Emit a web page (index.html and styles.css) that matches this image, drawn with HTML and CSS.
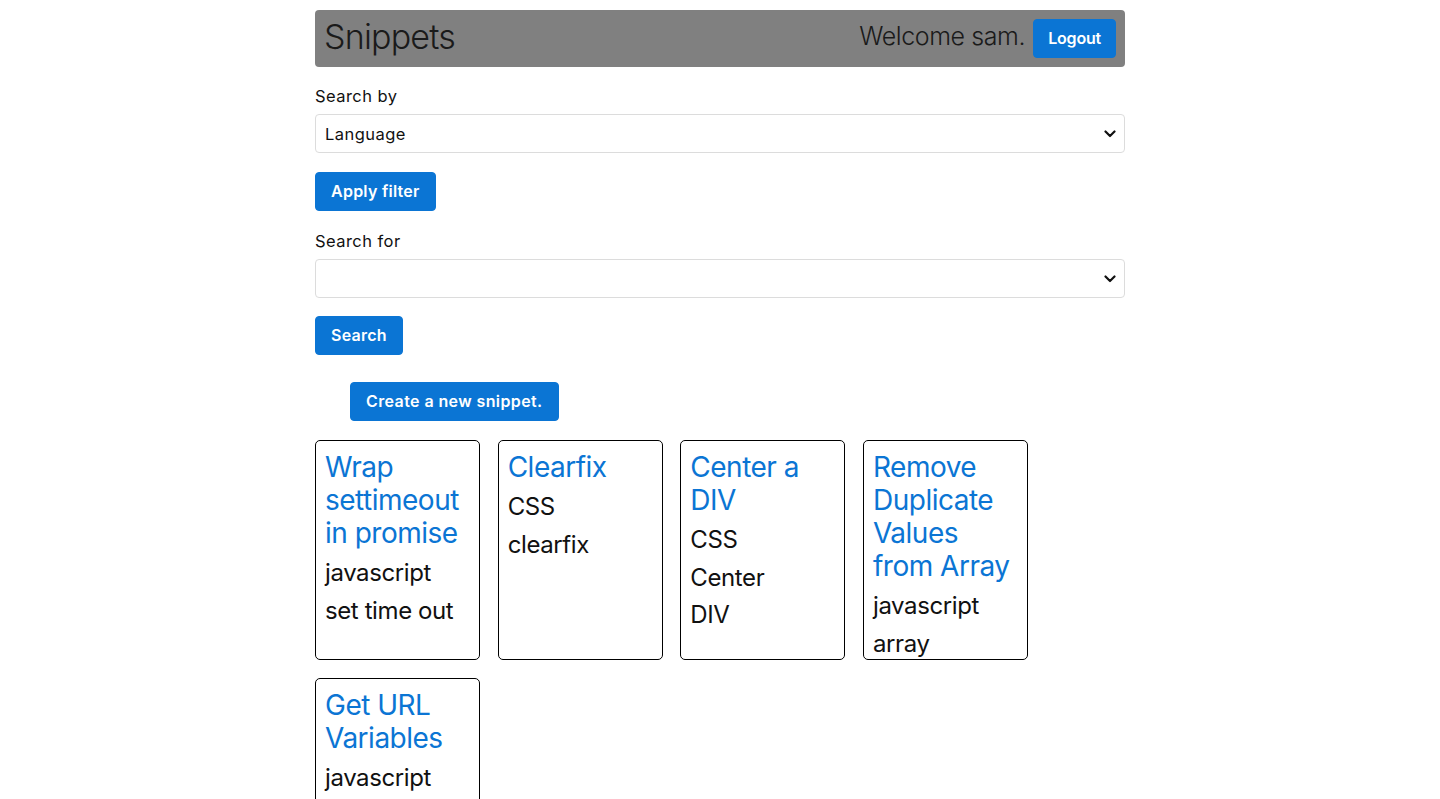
FILE: index.html
```html
<!DOCTYPE html>
<html lang="en">
<head>
<meta charset="utf-8">
<title>Snippets</title>
<link rel="stylesheet" href="styles.css">
</head>
<body>
<div class="container">
  <header class="topbar">
    <h1 class="brand">Snippets</h1>
    <div class="user">
      <span class="welcome">Welcome sam.</span>
      <button class="btn btn-logout">Logout</button>
    </div>
  </header>

  <form class="filters">
    <label class="label">Search by</label>
    <div class="select-wrap">
      <select class="select"><option>Language</option></select>
      <svg class="chev" width="12" height="8" viewBox="0 0 12 8"><path d="M1.5 1.5 L6 6 L10.5 1.5" fill="none" stroke="#111" stroke-width="2.2" stroke-linecap="round" stroke-linejoin="round"/></svg>
    </div>
    <button type="button" class="btn btn-apply">Apply filter</button>

    <label class="label label-for">Search for</label>
    <div class="select-wrap">
      <select class="select"><option></option></select>
      <svg class="chev" width="12" height="8" viewBox="0 0 12 8"><path d="M1.5 1.5 L6 6 L10.5 1.5" fill="none" stroke="#111" stroke-width="2.2" stroke-linecap="round" stroke-linejoin="round"/></svg>
    </div>
    <button type="button" class="btn btn-search">Search</button>
  </form>

  <button class="btn btn-create">Create a new snippet.</button>

  <div class="cards">
    <div class="card">
      <h3 class="card-title">Wrap settimeout in promise</h3>
      <p class="tag">javascript</p>
      <p class="tag">set time out</p>
    </div>
    <div class="card">
      <h3 class="card-title">Clearfix</h3>
      <p class="tag">CSS</p>
      <p class="tag">clearfix</p>
    </div>
    <div class="card">
      <h3 class="card-title">Center a DIV</h3>
      <p class="tag">CSS</p>
      <p class="tag">Center</p>
      <p class="tag">DIV</p>
    </div>
    <div class="card">
      <h3 class="card-title">Remove Duplicate Values from Array</h3>
      <p class="tag">javascript</p>
      <p class="tag">array</p>
    </div>
    <div class="card">
      <h3 class="card-title">Get URL Variables</h3>
      <p class="tag">javascript</p>
    </div>
  </div>
</div>
</body>
</html>
```

FILE: styles.css
```css
* { box-sizing: border-box; }
html, body { margin: 0; padding: 0; background: #fff; }
body {
  font-family: Inter, "Liberation Sans", Arial, sans-serif;
  font-size: 16px;
  line-height: 1.5;
  color: #111;
}
.container {
  width: 810px;
  margin: 0 auto;
  padding-top: 10px;
}
.topbar {
  height: 57px;
  background: #808080;
  border-radius: 4px;
  display: flex;
  align-items: center;
  justify-content: space-between;
  padding: 0 9px;
  margin-bottom: 17px;
}
.brand {
  margin: -4px 0 0;
  font-size: 34px;
  font-weight: 300;
  letter-spacing: -0.8px;
  color: #1a1a1a;
  line-height: 1;
}
.user { display: flex; align-items: center; gap: 8px; }
.welcome {
  font-size: 25px;
  font-weight: 300;
  letter-spacing: -0.4px;
  color: #1a1a1a;
  margin-top: -4px;
}
.btn {
  display: inline-block;
  font-family: inherit;
  font-size: 16px;
  font-weight: 600;
  line-height: 21px;
  padding: 8px 15px;
  color: #fff;
  background: #0b75d4;
  border: 1px solid #0b75d4;
  border-radius: 4px;
  cursor: pointer;
  letter-spacing: 0.25px;
}
.btn-logout { letter-spacing: -0.2px; padding: 8px 14px; }
.filters { display: flex; flex-direction: column; align-items: flex-start; }
.label {
  display: block;
  font-size: 16.5px;
  letter-spacing: 0.45px;
  line-height: 24px;
  margin-bottom: 6px;
}
.select-wrap {
  position: relative;
  width: 100%;
}
.select {
  -webkit-appearance: none;
  appearance: none;
  width: 100%;
  height: 39px;
  border: 1px solid #dcdcdc;
  border-radius: 4px;
  background: #fff;
  font-family: inherit;
  font-size: 16.5px;
  letter-spacing: 0.45px;
  color: #111;
  padding: 0 9px;
}
.chev {
  position: absolute;
  right: 9px;
  top: 16px;
  pointer-events: none;
}
.btn-apply { margin-top: 19px; }
.label-for { margin-top: 18px; margin-bottom: 6px; }
.btn-search { margin-top: 18px; }
.btn-create { margin: 27px 0 0 35px; letter-spacing: 0.4px; }
.cards {
  display: flex;
  flex-wrap: wrap;
  gap: 18px 17.67px;
  margin-top: 19px;
  width: 730px;
}
.card {
  width: 165px;
  height: 220px;
  border: 1px solid #000;
  border-radius: 5px;
  padding: 10px 9px 8px;
  overflow: visible;
}
.card-title {
  margin: 0 0 4px;
  font-size: 28px;
  font-weight: 400;
  line-height: 33px;
  letter-spacing: -0.5px;
  color: #0b75d4;
}
.tag {
  margin: 0;
  font-size: 24px;
  line-height: 37.5px;
  letter-spacing: -0.4px;
  color: #111;
}
```
